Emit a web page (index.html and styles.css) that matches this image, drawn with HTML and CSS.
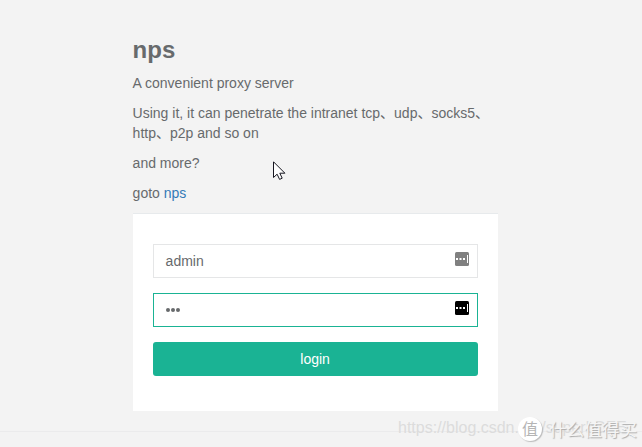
FILE: index.html
```html
<!DOCTYPE html>
<html lang="en">
<head>
<meta charset="utf-8">
<title>nps</title>
<link rel="stylesheet" href="styles.css">
</head>
<body>
<main class="login-page">
  <h2>nps</h2>
  <p>A convenient proxy server</p>
  <p>Using it, it can penetrate the intranet tcp、udp、socks5、<br>http、p2p and so on</p>
  <p>and more?</p>
  <p>goto <a href="#">nps</a></p>
  <form class="card">
    <div class="field"><span>admin</span>
      <svg class="key" viewBox="0 0 14 14"><rect width="14" height="14" rx="1.5" fill="#808080"/><path d="M1 6h2v2H1zM4.5 6h2v2h-2zM8 6h2v2H8zM12 3h1v8h-1z" fill="#fff"/></svg>
    </div>
    <div class="field focused"><span class="dots"><i></i><i></i><i></i></span>
      <svg class="key" viewBox="0 0 14 14"><rect width="14" height="14" rx="1.5" fill="#000"/><path d="M1 6h2v2H1zM4.5 6h2v2h-2zM8 6h2v2H8zM12 3h1v8h-1z" fill="#fff"/></svg>
    </div>
    <button type="button">login</button>
  </form>
</main>
<div class="footer-line"></div>
<svg class="cursor" viewBox="0 0 13 20"><path d="M.5.8v15.7l3.6-3.3 2.5 5.2 2.6-1.2-2.4-5h5.1z" fill="#fff" stroke="#15151f"/></svg>
<div class="url-mark">https://blog.csdn.net/superbDZE</div>
<div class="brand-mark"><span class="brand-badge">值</span><span class="brand-name">什么值得买</span></div>
</body>
</html>
```
FILE: styles.css
```css
* { box-sizing: border-box; }
body {
  margin: 0;
  height: 447px;
  overflow: hidden;
  position: relative;
  background: #f3f3f3;
  color: #676a6c;
  font: 14px/20px "Liberation Sans", "Noto Sans CJK SC", sans-serif;
}
.login-page { width: 365px; margin-left: 132.6px; padding-top: 37px; }
h2 { margin: 0 0 10px; font-size: 24px; line-height: 26px; font-weight: 700; }
p { margin: 0 0 10px; white-space: nowrap; }
a { color: #337ab7; text-decoration: none; }
.card {
  height: 198px;
  padding: 30px 20px 0;
  border-top: 1px solid #e7eaec;
  background: #fff;
}
.field {
  display: flex;
  align-items: center;
  justify-content: space-between;
  height: 34px;
  margin-bottom: 15px;
  padding: 0 8px 0 12px;
  border: 1px solid #e5e6e7;
}
.focused { border-color: #1ab394; }
.key { width: 14px; height: 14px; margin-bottom: 4px; }
.dots { display: flex; gap: 1px; }
.dots i { width: 4px; height: 4px; border-radius: 50%; background: #676a6c; }
button {
  display: block;
  width: 100%;
  height: 34px;
  padding: 0;
  border: 0;
  border-radius: 3px;
  background: #1ab394;
  color: #fff;
  font: inherit;
}
.footer-line { position: absolute; left: 0; right: 0; top: 431px; height: 1px; background: #ebebec; }
.cursor { position: absolute; left: 273px; top: 161px; width: 13px; height: 20px; }
.url-mark {
  position: absolute;
  left: 398px;
  top: 418px;
  color: #dcdcdc;
  font-size: 16px;
  white-space: nowrap;
}
.brand-mark {
  position: absolute;
  left: 518px;
  top: 417px;
  display: flex;
  align-items: center;
  gap: 7px;
  color: #f5f5f5;
  font-family: "Noto Sans CJK SC", sans-serif;
  white-space: nowrap;
}
.brand-badge {
  width: 24px;
  height: 24px;
  border-radius: 50%;
  background: #fff;
  color: #b5b5b5;
  font-size: 16px;
  line-height: 23px;
  text-align: center;
  box-shadow: 1px 1px 1px #bbb;
}
.brand-name { font-size: 17.6px; line-height: 24px; text-shadow: 1px 1px 1px #aaa; }
```
